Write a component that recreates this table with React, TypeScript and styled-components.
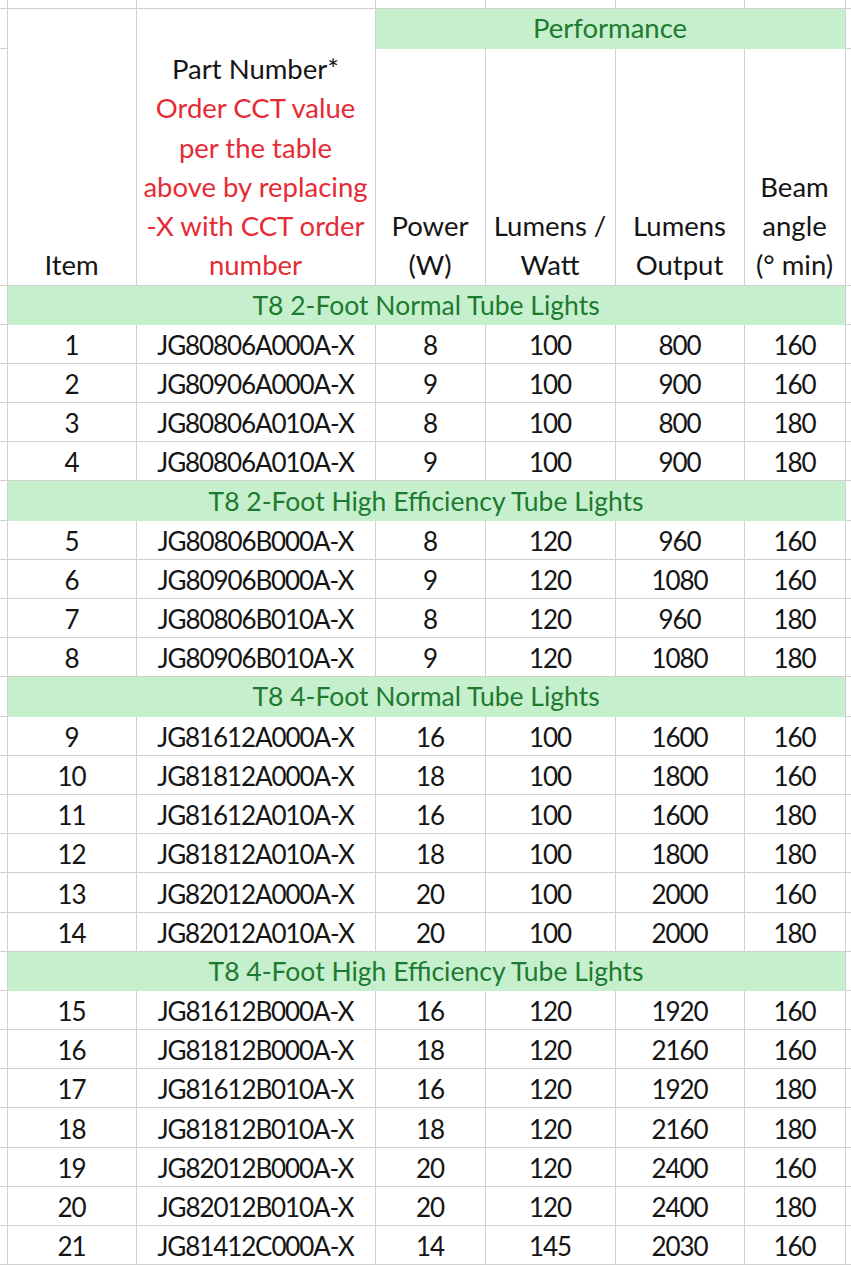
import styled, { createGlobalStyle } from "styled-components"

const GlobalStyle = createGlobalStyle`
  html, body {
    margin: 0;
    padding: 0;
    background: #ffffff;
  }
  body {
    font-family: Lato, "Open Sans", sans-serif;
    color: #151515;
  }
`

const GRID = "#d0d0d0"
const FILL = "#c6efce"
const GOOD = "#1d7a2f"
const RED = "#e62b35"

const COLS = [7, 129, 239, 110, 130, 129, 101, 6]

type Row = [number, string, number, number, number, number]

const sections: { title: string; rows: Row[] }[] = [
  {
    title: "T8 2-Foot Normal Tube Lights",
    rows: [
      [1, "JG80806A000A-X", 8, 100, 800, 160],
      [2, "JG80906A000A-X", 9, 100, 900, 160],
      [3, "JG80806A010A-X", 8, 100, 800, 180],
      [4, "JG80806A010A-X", 9, 100, 900, 180],
    ],
  },
  {
    title: "T8 2-Foot High Efficiency Tube Lights",
    rows: [
      [5, "JG80806B000A-X", 8, 120, 960, 160],
      [6, "JG80906B000A-X", 9, 120, 1080, 160],
      [7, "JG80806B010A-X", 8, 120, 960, 180],
      [8, "JG80906B010A-X", 9, 120, 1080, 180],
    ],
  },
  {
    title: "T8 4-Foot Normal Tube Lights",
    rows: [
      [9, "JG81612A000A-X", 16, 100, 1600, 160],
      [10, "JG81812A000A-X", 18, 100, 1800, 160],
      [11, "JG81612A010A-X", 16, 100, 1600, 180],
      [12, "JG81812A010A-X", 18, 100, 1800, 180],
      [13, "JG82012A000A-X", 20, 100, 2000, 160],
      [14, "JG82012A010A-X", 20, 100, 2000, 180],
    ],
  },
  {
    title: "T8 4-Foot High Efficiency Tube Lights",
    rows: [
      [15, "JG81612B000A-X", 16, 120, 1920, 160],
      [16, "JG81812B000A-X", 18, 120, 2160, 160],
      [17, "JG81612B010A-X", 16, 120, 1920, 180],
      [18, "JG81812B010A-X", 18, 120, 2160, 180],
      [19, "JG82012B000A-X", 20, 120, 2400, 160],
      [20, "JG82012B010A-X", 20, 120, 2400, 180],
      [21, "JG81412C000A-X", 14, 145, 2030, 160],
    ],
  },
]

const Sheet = styled.table`
  width: 851px;
  table-layout: fixed;
  border-collapse: collapse;
  font-size: 27.5px;
`

const Line = styled.tr<{ $h: number }>`
  height: ${(p) => p.$h}px;
`

const Cell = styled.td`
  border: 1px solid ${GRID};
  padding: 0;
  text-align: center;
  vertical-align: bottom;
  line-height: 36px;
  white-space: nowrap;
  overflow: hidden;
`

// digits in the source sheet are narrow, so data cells are tightened
const DataCell = styled(Cell)`
  font-size: 26px;
  letter-spacing: -1.1px;
`

const Edge = styled(Cell)`
  border-left: none;
`

const EdgeRight = styled(Cell)`
  border-right: none;
`

const TopCell = styled(Cell)`
  border-top: none;
`

const HeadCell = styled(Cell)`
  line-height: 39.2px;
  padding-bottom: 0;
`

const Band = styled(Cell)`
  background: ${FILL};
  color: ${GOOD};
  vertical-align: middle;
  border-left-color: ${FILL};
  border-bottom-color: ${FILL};
`

const SectionBand = styled(Band)`
  line-height: 36px;
  font-size: 26.5px;
`

const Note = styled.span`
  color: ${RED};
`

function HeaderRows() {
  return (
    <>
      <Line $h={8}>
        <Edge as={TopCell} />
        {COLS.slice(1, 7).map((_, i) => (
          <TopCell key={i} />
        ))}
        <EdgeRight as={TopCell} />
      </Line>
      <Line $h={40}>
        <Edge />
        <HeadCell rowSpan={2}>Item</HeadCell>
        <HeadCell rowSpan={2}>
          Part Number*
          <br />
          <Note>
            Order CCT value
            <br />
            per the table
            <br />
            above by replacing
            <br />
            -X with CCT order
            <br />
            number
          </Note>
        </HeadCell>
        <Band colSpan={4}>Performance</Band>
        <EdgeRight />
      </Line>
      <Line $h={237}>
        <Edge />
        <HeadCell>
          Power
          <br />
          (W)
        </HeadCell>
        <HeadCell>
          Lumens /
          <br />
          Watt
        </HeadCell>
        <HeadCell>
          Lumens
          <br />
          Output
        </HeadCell>
        <HeadCell>
          Beam
          <br />
          angle
          <br />
          (° min)
        </HeadCell>
        <EdgeRight />
      </Line>
    </>
  )
}

export default function App() {
  return (
    <>
      <GlobalStyle />
      <Sheet>
        <colgroup>
          {COLS.map((w, i) => (
            <col key={i} style={{ width: w }} />
          ))}
        </colgroup>
        <tbody>
          <HeaderRows />
          {sections.map((s) => (
            <SectionGroup key={s.title} title={s.title} rows={s.rows} />
          ))}
        </tbody>
      </Sheet>
    </>
  )
}

function SectionGroup({ title, rows }: { title: string; rows: Row[] }) {
  return (
    <>
      <Line $h={39.2}>
        <Edge />
        <SectionBand colSpan={6}>{title}</SectionBand>
        <EdgeRight />
      </Line>
      {rows.map((r) => (
        <Line key={r[0]} $h={39.2}>
          <Edge />
          {r.map((v, i) => (
            <DataCell key={i}>{v}</DataCell>
          ))}
          <EdgeRight />
        </Line>
      ))}
    </>
  )
}
